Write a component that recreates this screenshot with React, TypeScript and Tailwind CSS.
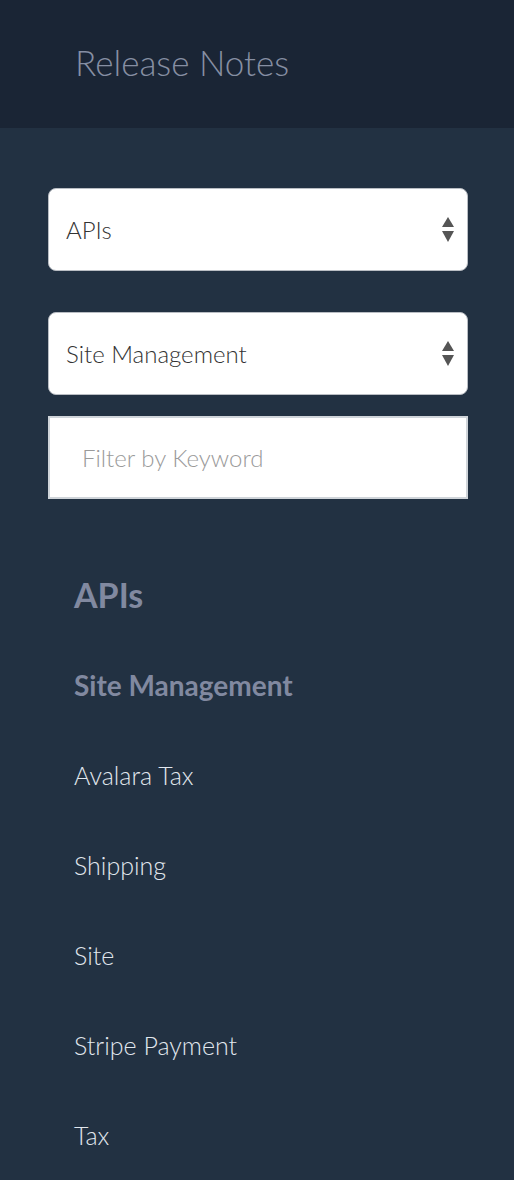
import React, { useState } from 'react';

const CATEGORIES = ['APIs', 'Platform', 'Storefront'];
const SECTIONS = ['Site Management', 'Orders', 'Catalog', 'Customers'];
const TOPICS = ['Avalara Tax', 'Shipping', 'Site', 'Stripe Payment', 'Tax'];

const SortArrows = () => (
  <svg className="pointer-events-none absolute right-[14px] top-1/2 -translate-y-1/2 w-[12px] h-[26px]" viewBox="0 0 12 26" fill="#555">
    <path d="M6 0 L12 10 L0 10 Z" />
    <path d="M0 14 L12 14 L6 25 Z" />
  </svg>
);

const Dropdown: React.FC<{ value: string; options: string[]; onChange: (v: string) => void }> = ({ value, options, onChange }) => (
  <div className="relative">
    <select
      value={value}
      onChange={(e) => onChange(e.target.value)}
      className="w-full h-[83px] appearance-none bg-white border border-[#b9bdc3] rounded-[8px] pl-[17px] pr-10 text-[24px] font-light text-[#333] outline-none"
    >
      {options.map((o) => (
        <option key={o} value={o}>{o}</option>
      ))}
    </select>
    <SortArrows />
  </div>
);

export default function App() {
  const [category, setCategory] = useState('APIs');
  const [section, setSection] = useState('Site Management');
  const [keyword, setKeyword] = useState('');

  const topics = TOPICS.filter((t) => t.toLowerCase().includes(keyword.toLowerCase()));

  return (
    <div className="min-h-[1180px] bg-[#223142] font-['Lato',sans-serif]">
      <header className="h-[128px] bg-[#1a2535] flex items-center pl-[75px]">
        <h1 className="text-[35px] font-light text-[#868fa3] -mt-[3px]">Release Notes</h1>
      </header>

      <div className="pl-[48px] pr-[46px] pt-[60px]">
        <Dropdown value={category} options={CATEGORIES} onChange={setCategory} />
        <div className="mt-[41px]">
          <Dropdown value={section} options={SECTIONS} onChange={setSection} />
        </div>
        <input
          type="text"
          placeholder="Filter by Keyword"
          value={keyword}
          onChange={(e) => setKeyword(e.target.value)}
          className="mt-[21px] w-full h-[83px] bg-white border-2 border-[#cfd4d9] pl-[32px] text-[24px] font-light text-[#444] placeholder:text-[#9a9a9a] outline-none"
        />

        {/* headings for the current filter, then the matching topics */}
        <nav className="pt-[50px] pl-[26px]">
          <div className="h-[90px] flex items-center text-[34px] font-bold text-[#8189a0]">{category}</div>
          <div className="h-[92px] flex items-center text-[28px] font-bold text-[#8189a0]">{section}</div>
          {topics.map((t) => (
            <div key={t} className="h-[90px] flex items-center text-[25px] font-light text-[#e1e7ee]">
              {t}
            </div>
          ))}
        </nav>
      </div>
    </div>
  );
}
